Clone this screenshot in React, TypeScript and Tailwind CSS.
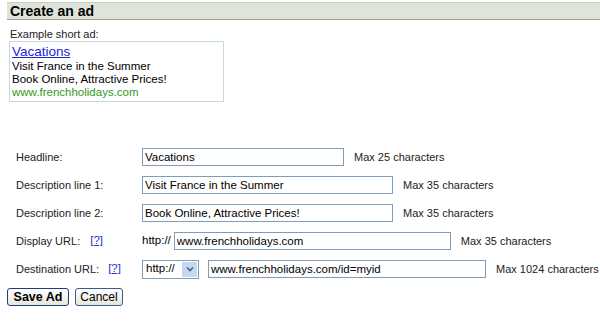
import React from 'react';

const inputCls =
  'h-[18px] border border-[#7f9db9] bg-white px-[2px] text-[11.5px] leading-[16px] text-black outline-none';

const Row: React.FC<{ label: React.ReactNode; children: React.ReactNode }> = ({ label, children }) => (
  <div className="flex h-[28px] items-center">
    <div className="w-[142px] shrink-0 pl-[16px] text-[11px] text-[#222]">{label}</div>
    {children}
  </div>
);

const Max: React.FC<{ n: number }> = ({ n }) => (
  <span className="ml-[10px] text-[11px] text-[#222]">Max {n} characters</span>
);

const Help: React.FC<{ ml: string }> = ({ ml }) => (
  <a className={`${ml} text-[11.5px] text-[#2233cc] underline`}>[?]</a>
);

const App: React.FC = () => {
  return (
    <div className="h-[321px] w-[600px] overflow-hidden bg-white" style={{ fontFamily: '"Liberation Sans", Arial, sans-serif' }}>
      {/* Title bar */}
      <div className="pt-[2px]">
        <div className="ml-[7px] h-[18px] border-t border-b border-t-[#c8cec4] border-b-[#9aa396] bg-[#dfe4da] pl-[3px] text-[14px] font-bold leading-[16px] text-black">
          Create an ad
        </div>
      </div>

      {/* Example ad */}
      <div className="ml-[10px] mt-[8px] text-[11px] leading-[12px] text-[#222]">Example short ad:</div>
      <div className="ml-[9px] mt-[1px] h-[61px] w-[215px] border border-[#c3d9e4] px-[2px] pt-[1px] text-[11.5px] leading-[13px]">
        <a className="block text-[13.5px] leading-[17px] text-[#2222dd] underline">Vacations</a>
        <div className="text-black">Visit France in the Summer</div>
        <div className="text-black">Book Online, Attractive Prices!</div>
        <div className="text-[#339922]">www.frenchholidays.com</div>
      </div>

      {/* Form */}
      <div className="mt-[41px] flex flex-col">
        <Row label="Headline:">
          <input className={`${inputCls} w-[202px]`} defaultValue="Vacations" />
          <Max n={25} />
        </Row>
        <Row label="Description line 1:">
          <input className={`${inputCls} w-[251px]`} defaultValue="Visit France in the Summer" />
          <Max n={35} />
        </Row>
        <Row label="Description line 2:">
          <input className={`${inputCls} w-[251px]`} defaultValue="Book Online, Attractive Prices!" />
          <Max n={35} />
        </Row>
        <Row
          label={
            <span className="flex items-center">
              Display URL:<Help ml="ml-[10px]" />
            </span>
          }
        >
          <span className="mr-[3px] text-[11.5px] text-black">http://</span>
          <input className={`${inputCls} w-[277px]`} defaultValue="www.frenchholidays.com" />
          <Max n={35} />
        </Row>
        <Row
          label={
            <span className="flex items-center">
              Destination URL:<Help ml="ml-[9px]" />
            </span>
          }
        >
          <div className="flex h-[19px] w-[57px] items-center border border-[#7f9db9] bg-white pl-[3px] text-[11.5px] text-black">
            <span className="flex-1">http://</span>
            <span className="m-[1px] flex h-[15px] w-[15px] items-center justify-center rounded-[1px] bg-[#c6d6f5]">
              <svg width="8" height="6" viewBox="0 0 8 6">
                <path d="M1 1.5 L4 4.5 L7 1.5" stroke="#4d6185" strokeWidth="1.6" fill="none" />
              </svg>
            </span>
          </div>
          <input className={`${inputCls} ml-[9px] w-[278px]`} defaultValue="www.frenchholidays.com/id=myid" />
          <Max n={1024} />
        </Row>
      </div>

      {/* Buttons */}
      <div className="ml-[7px] mt-[5px] flex gap-[6px]">
        <button className="h-[18px] w-[62px] rounded-[3px] border border-[#1c3f7a] bg-gradient-to-b from-white to-[#e6e6e0] text-[12.5px] font-bold leading-[14px] text-black">
          Save Ad
        </button>
        <button className="h-[18px] w-[48px] rounded-[3px] border border-[#3c5a8a] bg-gradient-to-b from-white to-[#e6e6e0] text-[12px] leading-[14px] text-black">
          Cancel
        </button>
      </div>
    </div>
  );
};

export default App;
